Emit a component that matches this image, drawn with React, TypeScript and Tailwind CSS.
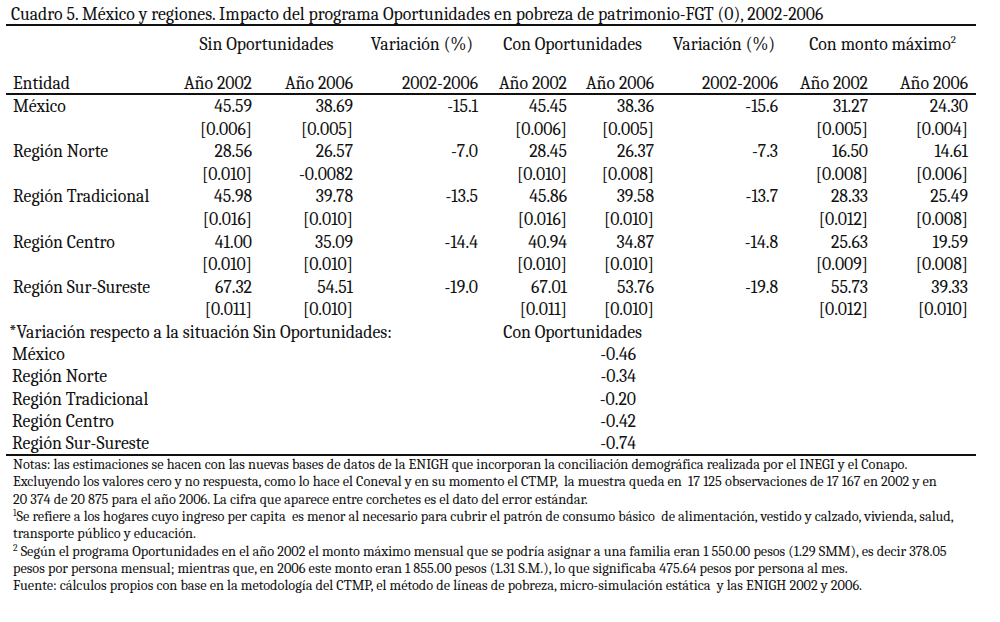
const ROWS = [
  {
    name: "México",
    vals: ["45.59", "38.69", "-15.1", "45.45", "38.36", "-15.6", "31.27", "24.30"],
    errs: ["[0.006]", "[0.005]", "", "[0.006]", "[0.005]", "", "[0.005]", "[0.004]"],
  },
  {
    name: "Región Norte",
    vals: ["28.56", "26.57", "-7.0", "28.45", "26.37", "-7.3", "16.50", "14.61"],
    errs: ["[0.010]", "-0.0082", "", "[0.010]", "[0.008]", "", "[0.008]", "[0.006]"],
  },
  {
    name: "Región Tradicional",
    vals: ["45.98", "39.78", "-13.5", "45.86", "39.58", "-13.7", "28.33", "25.49"],
    errs: ["[0.016]", "[0.010]", "", "[0.016]", "[0.010]", "", "[0.012]", "[0.008]"],
  },
  {
    name: "Región Centro",
    vals: ["41.00", "35.09", "-14.4", "40.94", "34.87", "-14.8", "25.63", "19.59"],
    errs: ["[0.010]", "[0.010]", "", "[0.010]", "[0.010]", "", "[0.009]", "[0.008]"],
  },
  {
    name: "Región Sur-Sureste",
    vals: ["67.32", "54.51", "-19.0", "67.01", "53.76", "-19.8", "55.73", "39.33"],
    errs: ["[0.011]", "[0.010]", "", "[0.011]", "[0.010]", "", "[0.012]", "[0.010]"],
  },
];

const VARIATION = [
  { name: "México", value: "-0.46" },
  { name: "Región Norte", value: "-0.34" },
  { name: "Región Tradicional", value: "-0.20" },
  { name: "Región Centro", value: "-0.42" },
  { name: "Región Sur-Sureste", value: "-0.74" },
];

const NOTES = [
  "Notas: las estimaciones se hacen con las nuevas bases de datos de la ENIGH que incorporan la conciliación demográfica realizada por el INEGI y el Conapo.",
  "Excluyendo los valores cero y no respuesta, como lo hace el Coneval y en su momento el CTMP,  la muestra queda en  17 125 observaciones de 17 167 en 2002 y en",
  "20 374 de 20 875 para el año 2006. La cifra que aparece entre corchetes es el dato del error estándar.",
];

const GRID =
  "grid grid-cols-[174px_72px_101px_125px_89px_87px_124px_90px_100px]";

const DataRow = ({ label, cells }: { label: string; cells: string[] }) => (
  <div className={`${GRID} h-[22.6px] leading-[22.6px]`}>
    <div className="pl-[7px] whitespace-nowrap">{label}</div>
    {cells.map((cell, i) => (
      <div key={i} className="text-right whitespace-nowrap">
        {cell}
      </div>
    ))}
  </div>
);

const Rule = () => <div className="h-[2px] bg-[#111]" />;

export default function App() {
  return (
    <div className="w-[1000px] h-[622px] bg-white text-[#111] font-serif [font-family:Liberation_Serif,serif] text-[17.75px]">
      <div className="ml-[6px] w-[970px]">
        <div className="h-[24px] pt-[4px] pl-[5px] leading-[20px] whitespace-nowrap">
          Cuadro 5. México y regiones. Impacto del programa Oportunidades en pobreza de
          patrimonio-FGT (0), 2002-2006
        </div>
        <Rule />

        <div className={`${GRID} h-[38px] pt-[8px] leading-[20px]`}>
          <div />
          <div className="col-span-2 text-center whitespace-nowrap">Sin Oportunidades</div>
          <div className="text-right pr-[5px] whitespace-nowrap">Variación (%)</div>
          <div className="col-span-2 text-right pr-[12px] whitespace-nowrap">
            Con Oportunidades
          </div>
          <div className="text-right pr-[3px] whitespace-nowrap">Variación (%)</div>
          <div className="col-span-2 text-right pr-[12px] whitespace-nowrap">
            Con monto máximo
            <sup className="text-[11px] -top-[7px]">2</sup>
          </div>
        </div>
        <div className={`${GRID} h-[29px] pt-[9px] leading-[20px]`}>
          <div className="pl-[7px]">Entidad</div>
          <div className="text-right">Año 2002</div>
          <div className="text-right">Año 2006</div>
          <div className="text-right">2002-2006</div>
          <div className="text-right">Año 2002</div>
          <div className="text-right">Año 2006</div>
          <div className="text-right">2002-2006</div>
          <div className="text-right">Año 2002</div>
          <div className="text-right">Año 2006</div>
        </div>
        <Rule />

        {ROWS.map((row) => (
          <div key={row.name}>
            <DataRow label={row.name} cells={row.vals} />
            <DataRow label="" cells={row.errs} />
          </div>
        ))}

        <div className="flex h-[22.2px] leading-[22.2px]">
          <div className="w-[470px] pl-[3px] whitespace-nowrap">
            *Variación respecto a la situación Sin Oportunidades:
          </div>
          <div className="w-[166px] text-right whitespace-nowrap">Con Oportunidades</div>
        </div>
        {VARIATION.map((item) => (
          <div key={item.name} className="flex h-[22.2px] leading-[22.2px]">
            <div className="w-[470px] pl-[6px] whitespace-nowrap">{item.name}</div>
            <div className="w-[160px] text-right">{item.value}</div>
          </div>
        ))}
        <Rule />

        <div className="pl-[7px] text-[14.3px] leading-[17.3px] whitespace-pre">
          {NOTES.map((line) => (
            <div key={line}>{line}</div>
          ))}
          <div>
            <sup className="text-[9.5px]">1</sup>Se refiere a los hogares cuyo ingreso per capita  es
            menor al necesario para cubrir el patrón de consumo básico  de alimentación, vestido y
            calzado, vivienda, salud,
          </div>
          <div>transporte público y educación.</div>
          <div>
            <sup className="text-[9.5px]">2</sup> Según el programa Oportunidades en el año 2002 el
            monto máximo mensual que se podría asignar a una familia eran 1 550.00 pesos (1.29 SMM),
            es decir 378.05
          </div>
          <div>
            pesos por persona mensual; mientras que, en 2006 este monto eran 1 855.00 pesos (1.31
            S.M.), lo que significaba 475.64 pesos por persona al mes.
          </div>
          <div>
            Fuente: cálculos propios con base en la metodología del CTMP, el método de líneas de
            pobreza, micro-simulación estática  y las ENIGH 2002 y 2006.
          </div>
        </div>
      </div>
    </div>
  );
}
